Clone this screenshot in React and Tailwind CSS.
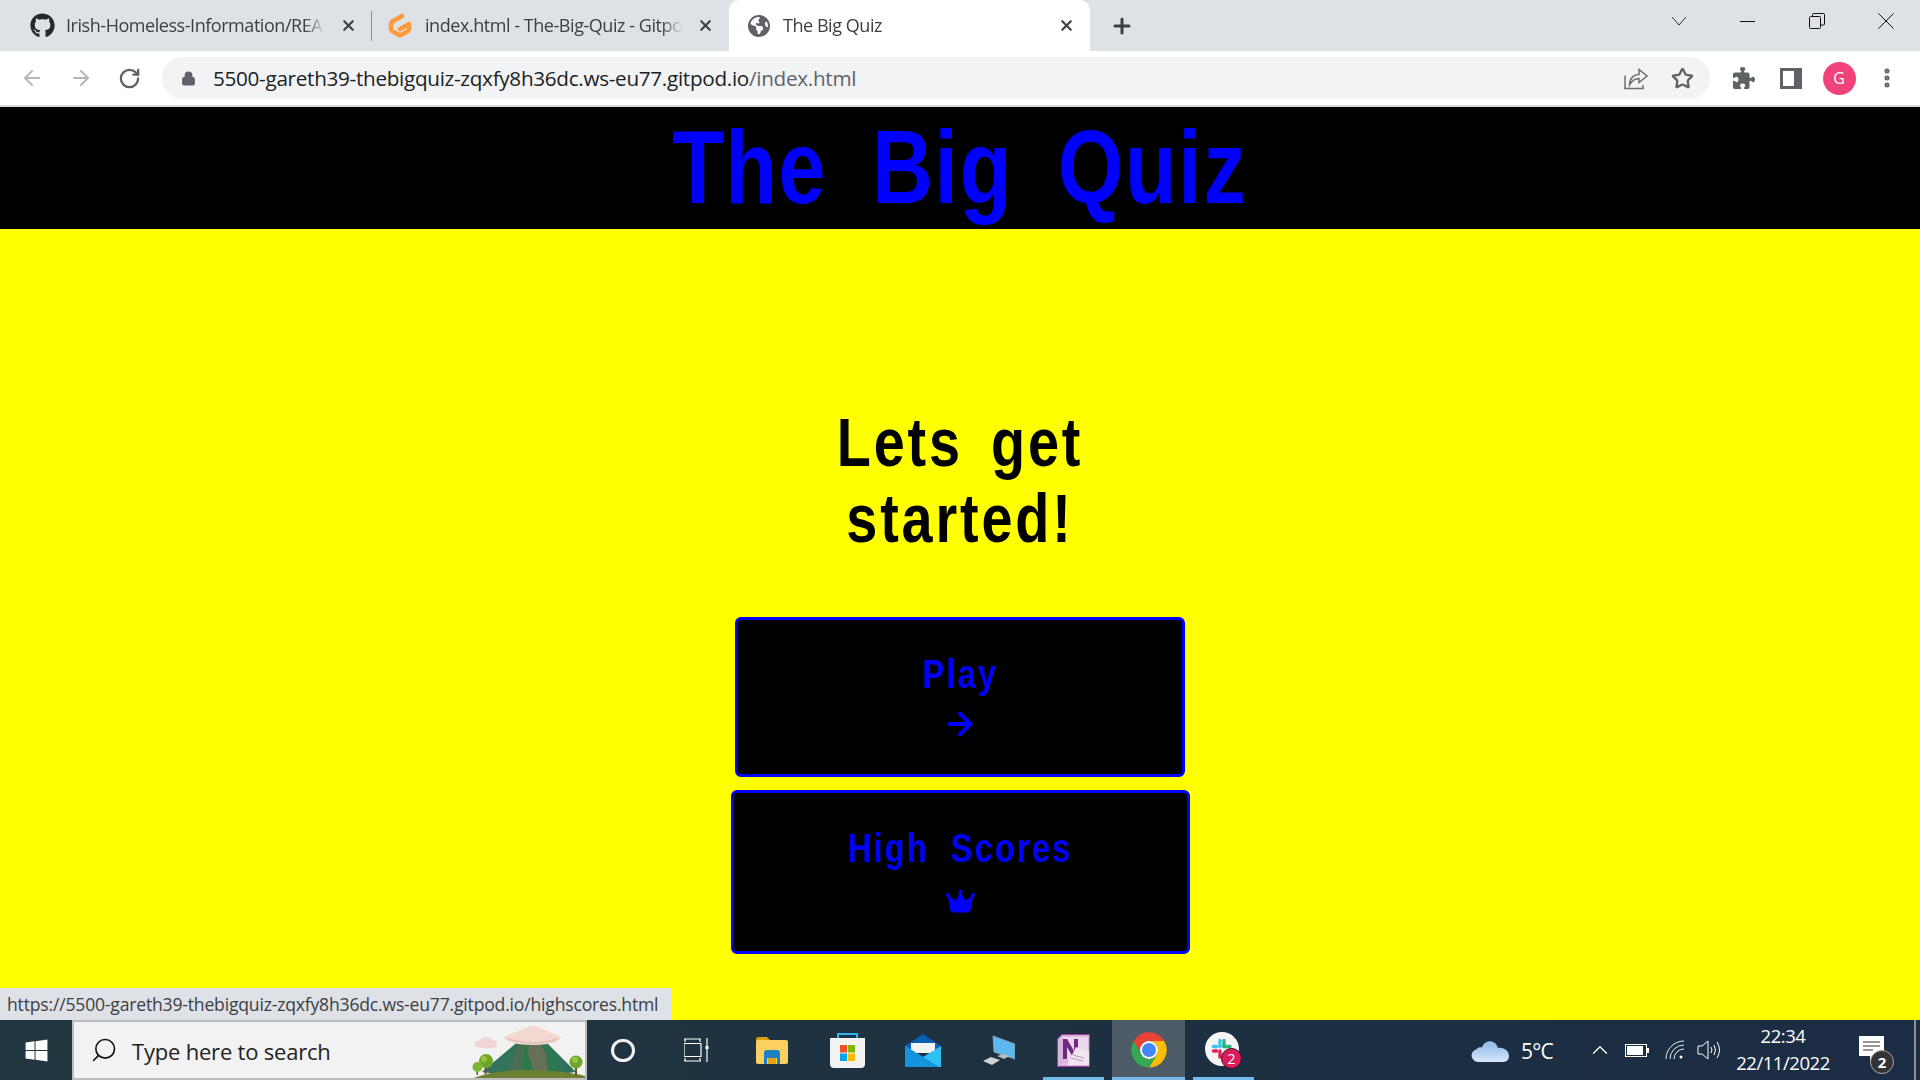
import React from "react";
import { FaGithub, FaPuzzlePiece, FaWindows, FaCrown, FaEarthAmericas } from "react-icons/fa6";
import { ArrowLeft, ArrowRight, RotateCw, Lock, Star, X, Plus, Search, ChevronUp, EllipsisVertical } from "lucide-react";

const ui = "font-['Open_Sans','Noto_Sans',sans-serif]";
const heading = "font-['Liberation_Sans',Arial,sans-serif] font-bold";

function Tab({ icon, title, active, widthClass, sep, iconMl, textMl }) {
  return (
    <div className={`${widthClass} h-[51px] flex items-center relative shrink-0 ${active ? "bg-white rounded-t-[10px]" : ""}`}>
      <div className={`w-[34px] ${iconMl} flex items-center justify-center shrink-0`}>{icon}</div>
      <div className={`${textMl} flex-1 min-w-0 overflow-hidden whitespace-nowrap text-[18px] tracking-[-0.45px] text-[#3c4043] [mask-image:linear-gradient(to_right,black_92%,transparent)] ${ui}`}>{title}</div>
      <X className="w-[17px] h-[17px] mx-[15px] shrink-0 text-[#3c4043]" strokeWidth={3} />
      {sep && <div className="w-px h-[30px] bg-[#8a8d91] absolute right-0 top-[11px]" />}
    </div>
  );
}

function GitpodIcon() {
  return (
    <svg width="24" height="25" viewBox="0 0 24 25">
      <path d="M14 3 L4.5 8.5 Q3 9.5 3 11 V16 Q3 17.5 4.5 18.5 L11 22 Q12 22.5 13 22 L19.5 18.5 Q21 17.5 21 16 V11 L12 16" fill="none" stroke="#ff9a3d" strokeWidth="4.6" strokeLinecap="round" strokeLinejoin="round" />
    </svg>
  );
}

function TabStrip() {
  return (
    <div className="h-[51px] bg-[#dee1e6] flex items-stretch">
      <Tab widthClass="w-[372px]" iconMl="ml-[25px]" textMl="ml-[7px]" sep icon={<FaGithub className="w-[25px] h-[25px] text-[#24292e]" />} title="Irish-Homeless-Information/README.md" />
      <Tab widthClass="w-[357px]" iconMl="ml-[11px]" textMl="ml-[8px]" icon={<GitpodIcon />} title="index.html - The-Big-Quiz - Gitpod" />
      <Tab widthClass="w-[361px]" iconMl="ml-[13px]" textMl="ml-[7px]" active icon={<FaEarthAmericas className="w-[22px] h-[22px] text-[#5f6368]" />} title="The Big Quiz" />
      <div className="w-[64px] flex items-center justify-center">
        <Plus className="w-[24px] h-[24px] text-[#3c4043]" strokeWidth={3} />
      </div>
      <div className="flex-1" />
      <div className="w-[68px] flex items-center justify-center pb-[9px]">
        <svg width="16" height="10" viewBox="0 0 16 10" fill="none" stroke="#333" strokeWidth="1"><path d="M1 1l7 8 7-8" /></svg>
      </div>
      <div className="w-[69px] flex items-center justify-center pb-[9px]"><div className="w-[15px] h-px bg-[#111]" /></div>
      <div className="w-[69px] flex items-center justify-center pb-[9px]">
        <svg width="16" height="16" viewBox="0 0 16 16" fill="none" stroke="#111" strokeWidth="1"><rect x="0.5" y="3.5" width="11" height="12" rx="1" /><path d="M3.5 3.5V1.5q0-1 1-1h10q1 0 1 1V11q0 1-1 1h-3" /></svg>
      </div>
      <div className="w-[69px] flex items-center justify-center pb-[9px]">
        <svg width="16" height="16" viewBox="0 0 16 16" fill="none" stroke="#111" strokeWidth="1"><path d="M0.5 0.5l15 15M15.5 0.5l-15 15" /></svg>
      </div>
    </div>
  );
}

function Toolbar() {
  return (
    <div className="h-[54px] bg-white flex items-center">
      <div className="w-[64px] flex justify-center"><ArrowLeft className="w-[24px] h-[24px] text-[#b5b7ba]" strokeWidth={2} /></div>
      <div className="w-[34px] flex justify-center"><ArrowRight className="w-[24px] h-[24px] text-[#b5b7ba]" strokeWidth={2} /></div>
      <div className="w-[62px] flex justify-center"><RotateCw className="w-[23px] h-[23px] text-[#5f6368]" strokeWidth={2.4} /></div>
      <div className="ml-[2px] w-[1548px] h-[42px] rounded-full bg-[#f1f3f4] flex items-center">
        <Lock className="ml-[19px] w-[15px] h-[17px] text-[#5f6368] fill-[#5f6368]" strokeWidth={2.5} />
        <div className={`ml-[17px] mt-[1px] text-[20.7px] tracking-[-0.3px] whitespace-nowrap text-[#202124] ${ui}`}>
          5500-gareth39-thebigquiz-zqxfy8h36dc.ws-eu77.gitpod.io<span className="text-[#5f6368]">/index.html</span>
        </div>
        <div className="flex-1" />
        <svg width="24" height="24" viewBox="0 0 24 24" fill="none" stroke="#6b6e72" strokeWidth="1.5">
          <path d="M1 9.5V22.5H19V19" />
          <path d="M5.5 19C5.5 12 10 8.5 15 8.5V3.5L23 10L15 16.5V12.5C11 12.5 8 14.5 5.5 19Z" />
        </svg>
        <Star className="ml-[23px] mr-[16px] w-[23px] h-[23px] text-[#5f6368]" strokeWidth={2.4} />
      </div>
      <div className="w-[66px] flex justify-center pl-[2px]"><FaPuzzlePiece className="w-[22px] h-[22px] text-[#5f6368]" /></div>
      <div className="w-[29px] flex justify-center">
        <div className="w-[22px] h-[21px] shrink-0 border-[3px] border-r-[8px] border-[#5f6368]" />
      </div>
      <div className="w-[68px] flex justify-center">
        <div className={`w-[33px] h-[33px] rounded-full bg-[#ef4379] text-white text-[16px] flex items-center justify-center ${ui}`}>G</div>
      </div>
      <div className="w-[28px] flex justify-center"><EllipsisVertical className="w-[24px] h-[24px] text-[#5f6368]" strokeWidth={3} /></div>
    </div>
  );
}

function Buttons() {
  return (
    <div className="flex flex-col items-center gap-[13px] mt-[61px]">
      <div className={`w-[450px] h-[160px] bg-black border-[3px] border-[#0000ff] rounded-[6px] flex flex-col items-center text-[#0000ff] pt-[31px] ${heading}`}>
        <div className="text-[40px] leading-[46px] tracking-[2.5px] [word-spacing:13px] scale-x-[0.82] whitespace-nowrap">Play</div>
        <ArrowRight className="mt-[9px] w-[36px] h-[36px]" strokeWidth={2.6} />
      </div>
      <div className={`w-[459px] h-[164px] bg-black border-[3px] border-[#0000ff] rounded-[6px] flex flex-col items-center text-[#0000ff] pt-[32px] ${heading}`}>
        <div className="text-[40px] leading-[46px] tracking-[2.5px] [word-spacing:13px] scale-x-[0.82] whitespace-nowrap">High Scores</div>
        <FaCrown className="mt-[17px] w-[33px] h-[26px]" />
      </div>
    </div>
  );
}

function Mountain() {
  return (
    <svg width="117" height="56" viewBox="0 2 117 56" className="absolute right-0 bottom-0">
      <defs>
        <linearGradient id="mt" x1="0" x2="1" y1="0" y2="0"><stop offset="0" stopColor="#3b6d6a" /><stop offset="0.5" stopColor="#2c7a4a" /><stop offset="1" stopColor="#2f6f5f" /></linearGradient>
      </defs>
      <path d="M8 27c-3-4 1-7 4-6 1-5 10-5 12-1 5-1 7 6 2 8q-9 1-18-1z" fill="#f0d4d6" />
      <path d="M14 52 L53 19 H75 L108 52 L60 58z" fill="url(#mt)" />
      <path d="M62 18 H70 L78 34 L80 52 H66 L60 34z" fill="#7a6d55" opacity="0.75" />
      <path d="M52 19 L58 22 L52 52 H40z" fill="#5c6a55" opacity="0.6" />
      <path d="M36 17 L62 6 Q65 5 68 6 L93 17 Q92 24 66 25 Q38 25 36 17z" fill="#f2d8d0" />
      <path d="M40 19 Q65 27 90 19" fill="none" stroke="#e6bdb6" strokeWidth="1.5" />
      <path d="M0 60 Q25 50 55 50 Q95 50 117 56 V60z" fill="#6d7f32" />
      <rect x="16.5" y="44" width="2" height="10" fill="#6a4b2a" /><circle cx="18" cy="41" r="7" fill="#6da52a" /><circle cx="16" cy="39" r="3" fill="#9ac43f" />
      <rect x="8.5" y="48" width="1.5" height="7" fill="#6a4b2a" /><circle cx="9.5" cy="47" r="5" fill="#7fb536" />
      <rect x="107" y="46" width="2" height="9" fill="#6a4b2a" /><circle cx="108" cy="42" r="6.5" fill="#6da52a" /><circle cx="107" cy="40" r="3" fill="#9ac43f" />
    </svg>
  );
}

const Explorer = () => (
  <svg width="32" height="27" viewBox="0 0 32 27">
    <path d="M0 3q0-3 3-3h8l4 4H0z" fill="#dd9f00" /><rect y="3" width="32" height="24" rx="2" fill="#fbd05f" />
    <path d="M8 27V16q0-3 3-3h10q3 0 3 3v11h-3v-6H11v6z" fill="#1f7fc4" /><rect x="12" y="21" width="8" height="6" fill="#e5a50a" />
  </svg>
);
const Store = () => (
  <svg width="35" height="35" viewBox="0 0 35 35">
    <path d="M8 6V1h19v5" fill="none" stroke="#29b6f6" strokeWidth="2" />
    <path d="M0 5h35v26q0 4-4 4H4q-4 0-4-4z" fill="#f3f3f3" />
    <rect x="10" y="12" width="7" height="7.5" fill="#f25022" /><rect x="18" y="12" width="7" height="7.5" fill="#7fba00" />
    <rect x="10" y="20.5" width="7" height="7.5" fill="#00a4ef" /><rect x="18" y="20.5" width="7" height="7.5" fill="#ffb900" />
  </svg>
);
const Mail = () => (
  <svg width="36" height="33" viewBox="0 0 36 33">
    <path d="M0 12L18 0l18 12v3H0z" fill="#0a5fb0" /><path d="M6 9h24v10H6z" fill="#f3f3f3" />
    <path d="M0 12l18 11 18-11v21H0z" fill="#2cc0f3" /><path d="M0 33V12l18 11 16 10z" fill="#1494dc" />
  </svg>
);
const Computer = () => (
  <svg width="32" height="31" viewBox="0 0 32 31">
    <path d="M10 1l22 8v15L11 17z" fill="#5bb9f0" stroke="#8a9aa5" /><path d="M0 26l8-4 9 3-8 5z" fill="#cfd3d6" /><path d="M14 21l6-2 7 2-6 3z" fill="#b9bdc0" />
  </svg>
);
const OneNote = () => (
  <svg width="33" height="33" viewBox="0 0 33 33">
    <path d="M5 0.5H32.5V32.5H0.5V5z" fill="#d9b4dc" stroke="#a23a9b" /><path d="M6 3h25v27L6 25z" fill="#ecd6ea" />
    <path d="M6 5h4l7 12V5h4v20h-4L10 13v12H6z" fill="#6e2a80" /><path d="M19 13l13 4v14H10z" fill="#efe6ef" />
    <path d="M14 24l12 3M16 21l11 3" stroke="#b99ab8" strokeWidth="1" />
  </svg>
);
const Chrome = () => (
  <svg width="36" height="36" viewBox="0 0 36 36">
    <path d="M2.8 9A17.5 17.5 0 0 1 33.2 9H18A9 9 0 0 0 10.2 22.5Z" fill="#ea4335" />
    <path d="M33.2 9A17.5 17.5 0 0 1 18 35.5L25.8 22.5A9 9 0 0 0 18 9Z" fill="#fbbc05" />
    <path d="M18 35.5A17.5 17.5 0 0 1 2.8 9L10.2 22.5A9 9 0 0 0 25.8 22.5Z" fill="#34a853" />
    <circle cx="18" cy="18" r="9" fill="#fff" /><circle cx="18" cy="18" r="7" fill="#4285f4" />
  </svg>
);
const Slack = () => (
  <div className="relative w-[34px] h-[34px] -ml-[3px] -mt-[3px] rounded-full bg-[#f5f5f5] flex items-center justify-center">
    <svg width="22" height="22" viewBox="0 0 22 22" strokeWidth="3.4" strokeLinecap="round">
      <path d="M9 2.5v6" stroke="#36c5f0" /><path d="M2.5 8.5h3" stroke="#36c5f0" />
      <path d="M13 2.5v6" stroke="#2eb67d" /><path d="M13 8.5h6" stroke="#2eb67d" />
      <path d="M9 13v6" stroke="#e01e5a" /><path d="M2.5 13h3" stroke="#e01e5a" />
    </svg>
    <div className={`absolute -right-[3px] -bottom-[3px] w-[21px] h-[21px] rounded-full bg-[#d91e5b] border border-[#3a0a1c] text-white text-[14px] flex items-center justify-center ${ui}`}>2</div>
  </div>
);

function Cell({ w, children, active, line }) {
  return (
    <div className={`${w} h-[60px] relative flex items-center justify-center shrink-0 ${active ? "bg-[#4c5b66]" : ""}`}>
      {children}
      {line && <div className="absolute left-0 right-0 bottom-0 h-[3px] bg-[#76b9ed]" />}
    </div>
  );
}

function Taskbar() {
  return (
    <div className="h-[60px] bg-linear-to-r from-[#21363f] to-[#1b2c44] flex items-center shrink-0">
      <Cell w="w-[72px]"><FaWindows className="w-[25px] h-[25px] text-white" /></Cell>
      <div className="w-[515px] h-[60px] border-2 border-[#bdbdbd] bg-[#f2f2f2] relative flex items-center">
        <Search className="ml-[16px] w-[28px] h-[28px] text-[#111] -scale-x-100" strokeWidth={1.4} />
        <div className={`ml-[14px] mt-[3px] text-[22px] tracking-[-0.2px] text-[#222] ${ui}`}>Type here to search</div>
        <Mountain />
      </div>
      <Cell w="w-[72px]"><div className="w-[24px] h-[23px] rounded-full border-[3px] border-[#f0f0f0]" /></Cell>
      <Cell w="w-[74px]">
        <svg width="25" height="24" viewBox="0 0 25 24" fill="none" stroke="#fff" strokeWidth="1.2"><path d="M0 1h17M0 23h17M1 1v3M16 1v3M0 5.5h17v13H0zM1 20v3M16 20v3M23 0v24" /><rect x="21.5" y="8" width="3" height="3" fill="#fff" stroke="none" /></svg>
      </Cell>
      <Cell w="w-[77px]"><Explorer /></Cell>
      <Cell w="w-[75px]"><Store /></Cell>
      <Cell w="w-[76px]"><Mail /></Cell>
      <Cell w="w-[76px]"><Computer /></Cell>
      <div className="w-[6px]" />
      <Cell w="w-[61px]" line><OneNote /></Cell>
      <div className="w-[8px]" />
      <Cell w="w-[73px]" active line><Chrome /></Cell>
      <div className="w-[8px]" />
      <Cell w="w-[61px]" line><Slack /></Cell>
      <div className="flex-1" />
      <svg width="38" height="24" viewBox="0 0 38 24"><defs><linearGradient id="cl" x1="0" x2="0" y1="0" y2="1"><stop offset="0" stopColor="#8db8ea" /><stop offset="1" stopColor="#d7e6f7" /></linearGradient></defs><path d="M7 24a6.5 6.5 0 0 1-1.5-12.8C7 9.5 9 9 11 9.5 13 2 24 0 27 10c6-1 11 3 11 8 0 3-2 6-6 6z" fill="url(#cl)" /></svg>
      <div className={`ml-[12px] mt-[3px] w-[33px] text-[21px] tracking-[-0.8px] text-white whitespace-nowrap ${ui}`}>5°C</div>
      <div className="w-[46px] ml-[23px] flex justify-center"><ChevronUp className="w-[26px] h-[26px] text-white" strokeWidth={1.2} /></div>
      <div className="w-[28px] flex justify-center">
        <svg width="24" height="13" viewBox="0 0 24 13"><rect x="0.5" y="0.5" width="21" height="12" fill="none" stroke="#fff" /><rect x="2" y="2" width="16" height="9" fill="#fff" /><rect x="22" y="4" width="2" height="5" fill="#fff" /></svg>
      </div>
      <div className="w-[48px] flex justify-center">
        <svg width="20" height="20" viewBox="0 0 20 20" fill="none" stroke="#fff" strokeWidth="0.9"><path d="M1 19A18 18 0 0 1 19 1M5 19A14 14 0 0 1 19 5M9 19A10 10 0 0 1 19 9" /><circle cx="16" cy="17" r="1.5" fill="#fff" stroke="none" /></svg>
      </div>
      <div className="w-[24px] -ml-[2px] flex justify-center">
        <svg width="24" height="22" viewBox="0 0 24 22" fill="none" stroke="#fff" strokeWidth="1"><path d="M1 7h4l6-5v18l-6-5H1z" /><path d="M14 8q2 3 0 6M17 6q3 5 0 10M20 3q5 8 0 16" /></svg>
      </div>
      <div className={`w-[112px] ml-[6px] text-center text-[18.5px] leading-[27px] tracking-[-0.45px] text-white -mt-[2px] ${ui}`}>
        <div>22:34</div><div>22/11/2022</div>
      </div>
      <div className="w-[60px] h-[60px] flex items-center justify-center relative ml-[2px]">
        <svg width="25" height="28" viewBox="0 0 25 28"><path d="M0 0h25v20h-8l-6 7v-7H0z" fill="#fff" /><path d="M4 6h17M4 10h17M4 14h10" stroke="#333" strokeWidth="1.2" /></svg>
        <div className={`absolute left-[29px] top-[30px] w-[24px] h-[24px] rounded-full bg-[#333] border border-[#aaa] text-white text-[15px] font-bold flex items-center justify-center ${ui}`}>2</div>
      </div>
      <div className="w-[13px]" />
      <div className="w-[6px] h-[60px] border-l-2 border-[#8b9299]" />
    </div>
  );
}

export default function App() {
  return (
    <div className="w-[1920px] h-[1080px] overflow-hidden flex flex-col bg-[#ffff00]">
      <TabStrip />
      <Toolbar />
      <div className="h-[2px] bg-[#d8dadd] shrink-0" />
      <header className="h-[122px] bg-black shrink-0 flex items-center justify-center">
        <h1 className={`text-[103px] leading-[122px] tracking-[2px] [word-spacing:24px] scale-x-[0.82] whitespace-nowrap text-[#0000ff] ${heading}`}>The Big Quiz</h1>
      </header>
      <main className="flex-1 relative flex flex-col items-center pt-[175px]">
        <h2 className={`w-[420px] text-center text-[68px] leading-[76px] tracking-[3.5px] [word-spacing:12px] scale-x-[0.82] text-black ${heading}`}>Lets get<br />started!</h2>
        <Buttons />
        <div className={`absolute left-0 bottom-0 w-[672px] h-[32px] bg-[#dee1e6] rounded-tr-[4px] px-[7px] flex items-center whitespace-nowrap text-[17.6px] tracking-[-0.2px] text-[#3c4043] ${ui}`}>
          https://5500-gareth39-thebigquiz-zqxfy8h36dc.ws-eu77.gitpod.io/highscores.html
        </div>
      </main>
      <Taskbar />
    </div>
  );
}
